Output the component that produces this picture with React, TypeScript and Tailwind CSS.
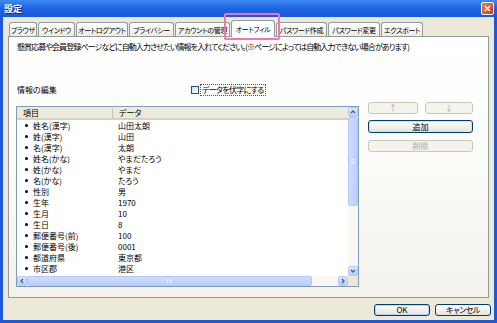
const tabs: [string, number][] = [
  ["ブラウザ", 28],
  ["ウインドウ", 37],
  ["オートログアウト", 52],
  ["プライバシー", 45],
  ["アカウントの管理", 55],
  ["オートフィル", 44],
  ["パスワード作成", 51],
  ["パスワード変更", 52],
  ["エクスポート", 42],
];

const rows: [string, string][] = [
  ["姓名(漢字)", "山田太朗"],
  ["姓(漢字)", "山田"],
  ["名(漢字)", "太朗"],
  ["姓名(かな)", "やまだたろう"],
  ["姓(かな)", "やまだ"],
  ["名(かな)", "たろう"],
  ["性別", "男"],
  ["生年", "1970"],
  ["生月", "10"],
  ["生日", "8"],
  ["郵便番号(前)", "100"],
  ["郵便番号(後)", "0001"],
  ["都道府県", "東京都"],
  ["市区郡", "港区"],
];

function Arrow({ d, className }: { d: string; className: string }) {
  return (
    <div
      className={`flex items-center justify-center border border-[#b4c8f6] rounded-[2px] bg-gradient-to-b from-[#dbe6fe] to-[#b9cdf8] ${className}`}
    >
      <svg width="6" height="6" viewBox="0 0 6 6">
        <path d={d} fill="none" stroke="#4d6185" strokeWidth="1.4" />
      </svg>
    </div>
  );
}

export default function App() {
  return (
    <div className="w-[497px] h-[323px] flex flex-col overflow-hidden bg-[#ece9d8] text-black font-['Noto_Sans_CJK_JP',sans-serif] text-[8px] leading-[10px] [font-feature-settings:'palt']">
      {/* title bar */}
      <div className="h-[17px] shrink-0 flex items-center justify-between pl-[4px] pr-[3px] bg-gradient-to-b from-[#3f8af2] via-[#1f63e2] to-[#1a59d9]">
        <span className="text-white font-bold text-[9px] [text-shadow:1px_1px_0_#0a2a7a]">設定</span>
        <div className="w-[13px] h-[13px] rounded-[2px] border border-white bg-gradient-to-br from-[#ea7c5c] to-[#c9391c] flex items-center justify-center">
          <svg width="7" height="7" viewBox="0 0 7 7">
            <path d="M1 1L6 6M6 1L1 6" stroke="white" strokeWidth="1.5" />
          </svg>
        </div>
      </div>

      <div className="flex-1 flex flex-col border-x-[3px] border-b-[3px] border-[#1c58d9] pt-[3px]">
        {/* tabs */}
        <div className="relative flex items-end h-[16px] pl-[6px] gap-[1px] text-[7px] tracking-[-0.3px]">
          {tabs.map(([label, w], i) =>
            i === 5 ? (
              <div
                key={label}
                style={{ width: w }}
                className="relative z-10 h-[17px] -mb-px flex items-center justify-center whitespace-nowrap bg-white border border-b-0 border-[#919b9c] rounded-t-[3px]"
              >
                {label}
              </div>
            ) : (
              <div
                key={label}
                style={{ width: w }}
                className="h-[14px] flex items-center justify-center whitespace-nowrap bg-gradient-to-b from-white to-[#ecebe5] border border-b-0 border-[#919b9c] rounded-t-[3px]"
              >
                {label}
              </div>
            )
          )}
          <div className="absolute z-20 left-[221px] top-[-7px] w-[56px] h-[27px] border-2 border-[#f374ae] rounded-[2px]" />
        </div>

        {/* panel */}
        <div className="mx-[5px] h-[262px] border border-[#919b9c] bg-gradient-to-b from-white via-[#fbfbf8] to-[#f3f1ea] flex flex-col">
          <p className="pl-[8px] pt-[5px] whitespace-nowrap tracking-[-0.9px]">
            懸賞応募や会員登録ページなどに自動入力させたい情報を入れてください。(※ページによっては自動入力できない場合があります)
          </p>

          <div className="flex items-center mt-[33px] pl-[8px] h-[10px]">
            <span className="w-[174px]">情報の編集</span>
            <span className="w-[8px] h-[8px] border border-[#1c5180] bg-gradient-to-br from-[#dcdcd7] to-white" />
            <span className="ml-[1px] px-[1px] border border-dotted border-[#555] tracking-[-0.7px]">データを伏字にする</span>
          </div>

          <div className="flex pl-[7px] mt-[7px]">
            {/* list view */}
            <div className="mt-[4px] w-[343px] h-[181px] border border-[#7f9db9] bg-white flex flex-col">
              <div className="flex h-[169px]">
                <div className="w-[331px] overflow-hidden">
                  <div className="h-[13px] flex items-center bg-[#ebeadb] border-b-2 border-[#d6d2c2]">
                    <div className="w-[96px] pl-[6px] border-r border-[#c7c5b2]">項目</div>
                    <div className="pl-[6px]">データ</div>
                  </div>
                  {rows.map(([k, v]) => (
                    <div key={k} className="h-[11px] flex items-center">
                      <div className="w-[96px] pl-[8px] flex items-center whitespace-nowrap">
                        <span className="w-[3px] h-[3px] rounded-full bg-black mr-[5px]" />
                        {k}
                      </div>
                      <div className="pl-[5px] whitespace-nowrap">{v}</div>
                    </div>
                  ))}
                </div>
                {/* vertical scrollbar */}
                <div className="w-[10px] flex flex-col bg-[#f8f7f3]">
                  <Arrow d="M1 4L3 2L5 4" className="h-[10px]" />
                  <div className="h-[89px] border border-[#b4c8f6] rounded-[2px] bg-gradient-to-r from-[#cddbfd] to-[#bccffa] flex flex-col items-center justify-center gap-[1px]">
                    <span className="w-[4px] h-px bg-[#eef3ff]" />
                    <span className="w-[4px] h-px bg-[#eef3ff]" />
                    <span className="w-[4px] h-px bg-[#eef3ff]" />
                  </div>
                  <div className="flex-1" />
                  <Arrow d="M1 2L3 4L5 2" className="h-[10px]" />
                </div>
              </div>
              {/* horizontal scrollbar */}
              <div className="flex h-[10px] bg-[#f8f7f3]">
                <Arrow d="M4 1L2 3L4 5" className="w-[10px]" />
                <div className="w-[285px] border border-[#b4c8f6] rounded-[2px] bg-gradient-to-b from-[#cddbfd] to-[#bccffa] flex items-center justify-center gap-[1px]">
                  <span className="w-px h-[4px] bg-[#eef3ff]" />
                  <span className="w-px h-[4px] bg-[#eef3ff]" />
                  <span className="w-px h-[4px] bg-[#eef3ff]" />
                </div>
                <div className="flex-1" />
                <Arrow d="M2 1L4 3L2 5" className="w-[10px]" />
                <div className="w-[10px] bg-[#ece9d8]" />
              </div>
            </div>

            {/* side buttons */}
            <div className="ml-[9px] w-[105px] flex flex-col">
              <div className="flex gap-[7px]">
                <div className="w-[50px] h-[12px] flex items-center justify-center rounded-[3px] border border-[#c9c7ba] bg-[#f4f3ee] text-[#aca899]">↑</div>
                <div className="w-[48px] h-[12px] flex items-center justify-center rounded-[3px] border border-[#c9c7ba] bg-[#f4f3ee] text-[#aca899]">↓</div>
              </div>
              <div className="mt-[6px] h-[13px] flex items-center justify-center rounded-[3px] border border-[#003c74] bg-gradient-to-b from-white to-[#e6e3d8] shadow-[inset_0_0_0_1px_#cfe0f8]">追加</div>
              <div className="mt-[7px] h-[12px] flex items-center justify-center rounded-[3px] border border-[#c9c7ba] bg-[#f4f3ee] text-[#aca899]">削除</div>
            </div>
          </div>
        </div>

        {/* footer */}
        <div className="flex justify-end gap-[5px] pt-[6px] pr-[3px]">
          <div className="w-[56px] h-[12px] flex items-center justify-center rounded-[3px] border border-[#003c74] bg-gradient-to-b from-white to-[#e6e3d8] shadow-[inset_0_0_0_1px_#bcd4f6]">OK</div>
          <div className="w-[56px] h-[12px] flex items-center justify-center rounded-[3px] border border-[#003c74] bg-gradient-to-b from-white to-[#e6e3d8] tracking-[-0.5px]">キャンセル</div>
        </div>
      </div>
    </div>
  );
}
